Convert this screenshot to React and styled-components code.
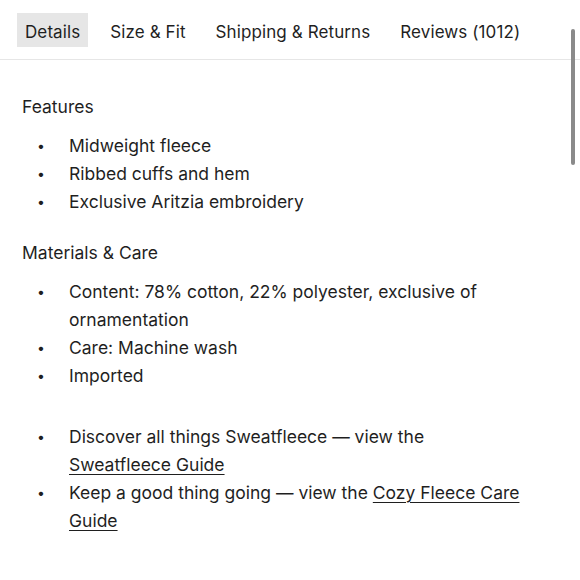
import React from "react"
import styled, { createGlobalStyle } from "styled-components"

const Global = createGlobalStyle`
  html, body {
    margin: 0;
    padding: 0;
    background: #fff;
  }
  body {
    font-family: "Inter", "Liberation Sans", sans-serif;
    color: #1f1f1f;
    -webkit-font-smoothing: antialiased;
  }
`

const Page = styled.div`
  position: relative;
  width: 580px;
  height: 580px;
  overflow: hidden;
  background: #fff;
`

const TabBar = styled.nav`
  display: flex;
  align-items: center;
  gap: 14px;
  padding: 13px 0 12px 17px;
  border-bottom: 1px solid #e6e6e6;
`

const Tab = styled.button`
  border: 0;
  margin: 0;
  padding: 3px 8px 0;
  height: 34px;
  font: inherit;
  font-size: 17px;
  letter-spacing: 0.1px;
  color: #1f1f1f;
  background: ${p => (p.active ? "#e6e6e6" : "transparent")};
  cursor: pointer;
`

const Content = styled.section`
  padding: 33px 52px 0 22px;
`

const Heading = styled.h3`
  margin: 0;
  font-size: 17.5px;
  font-weight: 400;
  line-height: 28px;
`

const List = styled.ul`
  list-style: none;
  margin: ${p => p.top || 11}px 0 ${p => p.bottom || 23}px;
  padding: 0;
`

const Item = styled.li`
  display: grid;
  grid-template-columns: 47px 1fr;
  font-size: 17.5px;
  line-height: 28px;

  &::before {
    content: "•";
    padding-left: 15px;
    font-size: 14px;
  }
`

const GuideLink = styled.a`
  color: inherit;
  text-decoration: underline;
  text-underline-offset: 3px;
  text-decoration-thickness: 1px;
`

const Thumb = styled.div`
  position: absolute;
  top: 29px;
  right: 5px;
  width: 4px;
  height: 136px;
  border-radius: 2px;
  background: #8a8a8a;
`

const tabs = ["Details", "Size & Fit", "Shipping & Returns", "Reviews (1012)"]

export default function App() {
  return (
    <Page>
      <Global />
      <TabBar>
        {tabs.map((t, i) => (
          <Tab key={t} active={i === 0}>{t}</Tab>
        ))}
      </TabBar>
      <Content>
        <Heading>Features</Heading>
        <List>
          <Item><span>Midweight fleece</span></Item>
          <Item><span>Ribbed cuffs and hem</span></Item>
          <Item><span>Exclusive Aritzia embroidery</span></Item>
        </List>
        <Heading>Materials &amp; Care</Heading>
        <List bottom={33}>
          <Item><span>Content: 78% cotton, 22% polyester, exclusive of ornamentation</span></Item>
          <Item><span>Care: Machine wash</span></Item>
          <Item><span>Imported</span></Item>
        </List>
        <List>
          <Item>
            <span>Discover all things Sweatfleece — view the <GuideLink href="#">Sweatfleece Guide</GuideLink></span>
          </Item>
          <Item>
            <span>Keep a good thing going — view the <GuideLink href="#">Cozy Fleece Care Guide</GuideLink></span>
          </Item>
        </List>
      </Content>
      <Thumb />
    </Page>
  )
}
